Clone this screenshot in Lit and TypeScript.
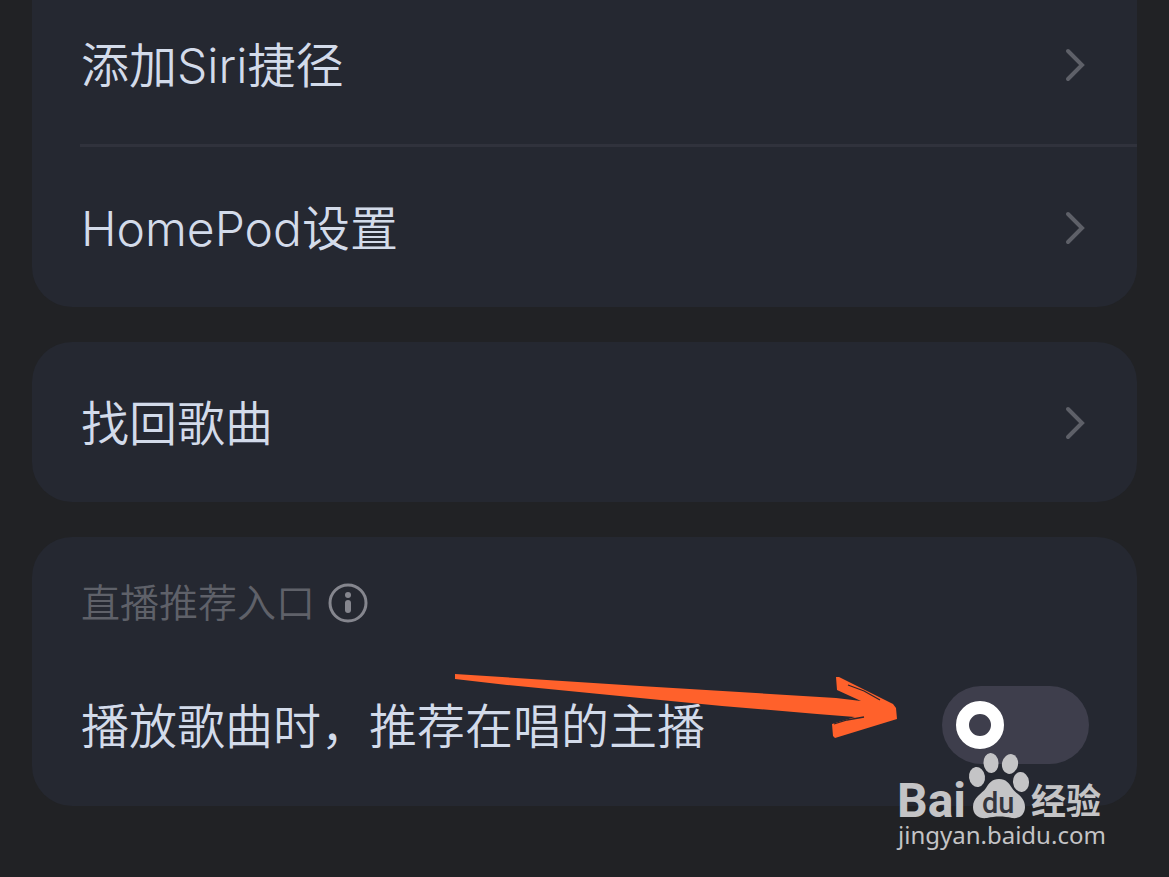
import { LitElement, html, css, svg } from "lit";
import { customElement, property, state } from "lit/decorators.js";

@customElement("settings-link")
export class SettingsLink extends LitElement {
  @property() label = "";

  static styles = css`
    :host {
      display: block;
    }
    .row {
      display: flex;
      align-items: center;
      justify-content: space-between;
      min-height: 160px;
      padding: 2px 48px 0 49px;
      box-sizing: border-box;
      color: #d3dbea;
      text-decoration: none;
      font-size: 48px;
      line-height: 64px;
    }
    .label {
      padding-top: 2px;
    }
    .chevron {
      flex: none;
      width: 28px;
      height: 40px;
    }
  `;

  render() {
    return html`
      <a class="row" href="#">
        <span class="label">${this.label}</span>
        <svg class="chevron" viewBox="0 0 28 40" fill="none" stroke="#5e6068" stroke-width="4" stroke-linecap="round">
          <path d="M7 6 L21 20 L7 34" />
        </svg>
      </a>
    `;
  }
}

@customElement("site-watermark")
export class SiteWatermark extends LitElement {
  static styles = css`
    :host {
      display: block;
    }
    .mark {
      display: block;
      width: 214px;
      height: 104px;
    }
    .latin {
      font-family: Roboto, sans-serif;
      font-weight: 700;
      font-size: 48px;
    }
    .inner {
      font-family: Roboto, sans-serif;
      font-weight: 500;
      font-size: 29px;
      fill: #34353d;
    }
    .han {
      font-family: "Noto Sans CJK SC", sans-serif;
      font-weight: 700;
      font-size: 35px;
    }
    .address {
      font-family: "Noto Sans", sans-serif;
      font-weight: 400;
      font-size: 24px;
    }
  `;

  render() {
    return html`
      <svg class="mark" viewBox="0 0 214 104" fill="#c4c4c6">
        ${svg`
          <text class="latin" x="2" y="65">Bai</text>
          <ellipse cx="82" cy="25" rx="8" ry="10" transform="rotate(-8 82 25)" />
          <ellipse cx="96" cy="11" rx="7.5" ry="10" transform="rotate(-4 96 11)" />
          <ellipse cx="115" cy="12" rx="8" ry="10" transform="rotate(12 115 12)" />
          <ellipse cx="126" cy="30" rx="8" ry="10" transform="rotate(-6 126 30)" />
          <path d="M104 27 C111 27 114 31 117 36 C121 42 130 45 130 55 C130 63 124 67 117 66 C109 64 100 64 92 66 C84 67 78 63 78 55 C78 45 87 42 91 36 C94 31 97 27 104 27 Z" />
          <text class="inner" x="87" y="61">du</text>
          <text class="han" x="136" y="62">经验</text>
          <text class="address" x="3" y="92">jingyan.baidu.com</text>
        `}
      </svg>
    `;
  }
}

@customElement("app-root")
export class AppRoot extends LitElement {
  @state() private recommend = false;

  static styles = css`
    :host {
      display: block;
      position: relative;
      min-height: 100vh;
      overflow: hidden;
      box-sizing: border-box;
      background: #212225;
      color: #d3dbea;
      font-family: Inter, "Noto Sans CJK SC", sans-serif;
      font-weight: 350;
    }
    .page {
      display: flex;
      flex-direction: column;
      gap: 35px;
      margin-top: -16px;
      padding: 0 32px 71px;
    }
    .card {
      border-radius: 40px;
      background: #252831;
    }
    .card:first-child {
      border-top-left-radius: 0;
      border-top-right-radius: 0;
    }
    .divider {
      height: 3px;
      margin: 0 0 0 48px;
      border: 0;
      background: #30323c;
    }
    .live {
      padding: 34px 48px 42px 49px;
    }
    .heading {
      display: flex;
      align-items: center;
      gap: 12px;
      margin: 0;
      color: #5f6169;
      font-size: 39px;
      line-height: 64px;
      font-weight: 350;
    }
    .info {
      display: flex;
      padding: 0;
      border: 0;
      background: none;
    }
    .info svg {
      width: 42px;
      height: 42px;
    }
    .option {
      position: relative;
      display: flex;
      align-items: center;
      justify-content: space-between;
      margin-top: 51px;
      font-size: 48px;
      line-height: 64px;
    }
    .option label {
      padding-top: 4px;
    }
    .switch {
      appearance: none;
      flex: none;
      display: flex;
      align-items: center;
      width: 147px;
      height: 78px;
      margin: 0;
      padding: 0 14px;
      box-sizing: border-box;
      border-radius: 39px;
      background: #3e3e4c;
    }
    .switch::before {
      content: "";
      width: 48px;
      height: 48px;
      box-sizing: border-box;
      border: 13px solid #fff;
      border-radius: 50%;
    }
    .switch:checked {
      justify-content: flex-end;
      background: #3aa675;
    }
    .arrow {
      position: absolute;
      right: 191px;
      top: -12px;
      width: 448px;
      height: 70px;
      pointer-events: none;
    }
    .watermark {
      position: absolute;
      right: 60px;
      bottom: 21px;
      pointer-events: none;
    }
  `;

  private toggle(event: Event) {
    this.recommend = (event.target as HTMLInputElement).checked;
  }

  render() {
    return html`
      <main class="page">
        <section class="card">
          <settings-link label="添加Siri捷径"></settings-link>
          <hr class="divider" />
          <settings-link label="HomePod设置"></settings-link>
        </section>
        <section class="card">
          <settings-link label="找回歌曲"></settings-link>
        </section>
        <section class="card live">
          <h2 class="heading">
            直播推荐入口
            <button class="info" aria-label="直播推荐入口">
              <svg viewBox="0 0 42 42">
                <circle cx="21" cy="21" r="18" fill="none" stroke="#85868e" stroke-width="3" />
                <circle cx="21" cy="13" r="3" fill="#85868e" />
                <rect x="18" y="18" width="6" height="13" rx="3" fill="#85868e" />
              </svg>
            </button>
          </h2>
          <div class="option">
            <label for="recommend">播放歌曲时，推荐在唱的主播</label>
            <input class="switch" id="recommend" type="checkbox" role="switch" .checked=${this.recommend} @change=${this.toggle} />
            <svg class="arrow" viewBox="0 0 448 70">
              <path fill="#ff612b" d="M5 0 L190 12 L386 24 L411 27 L387 16 L386 3 L389 3 L443 30 L446 34 L447 45 L385 64 L383 62 L382 50 L405 43 L367 40 L272 32 L190 24 L57 11 L5 5 Z" />
              <path fill="none" stroke="#30262b" stroke-width="1.3" d="M398 11 L414 17 L430 26 M384 50 L397 46 L414 43" />
            </svg>
          </div>
        </section>
      </main>
      <site-watermark class="watermark"></site-watermark>
    `;
  }
}
